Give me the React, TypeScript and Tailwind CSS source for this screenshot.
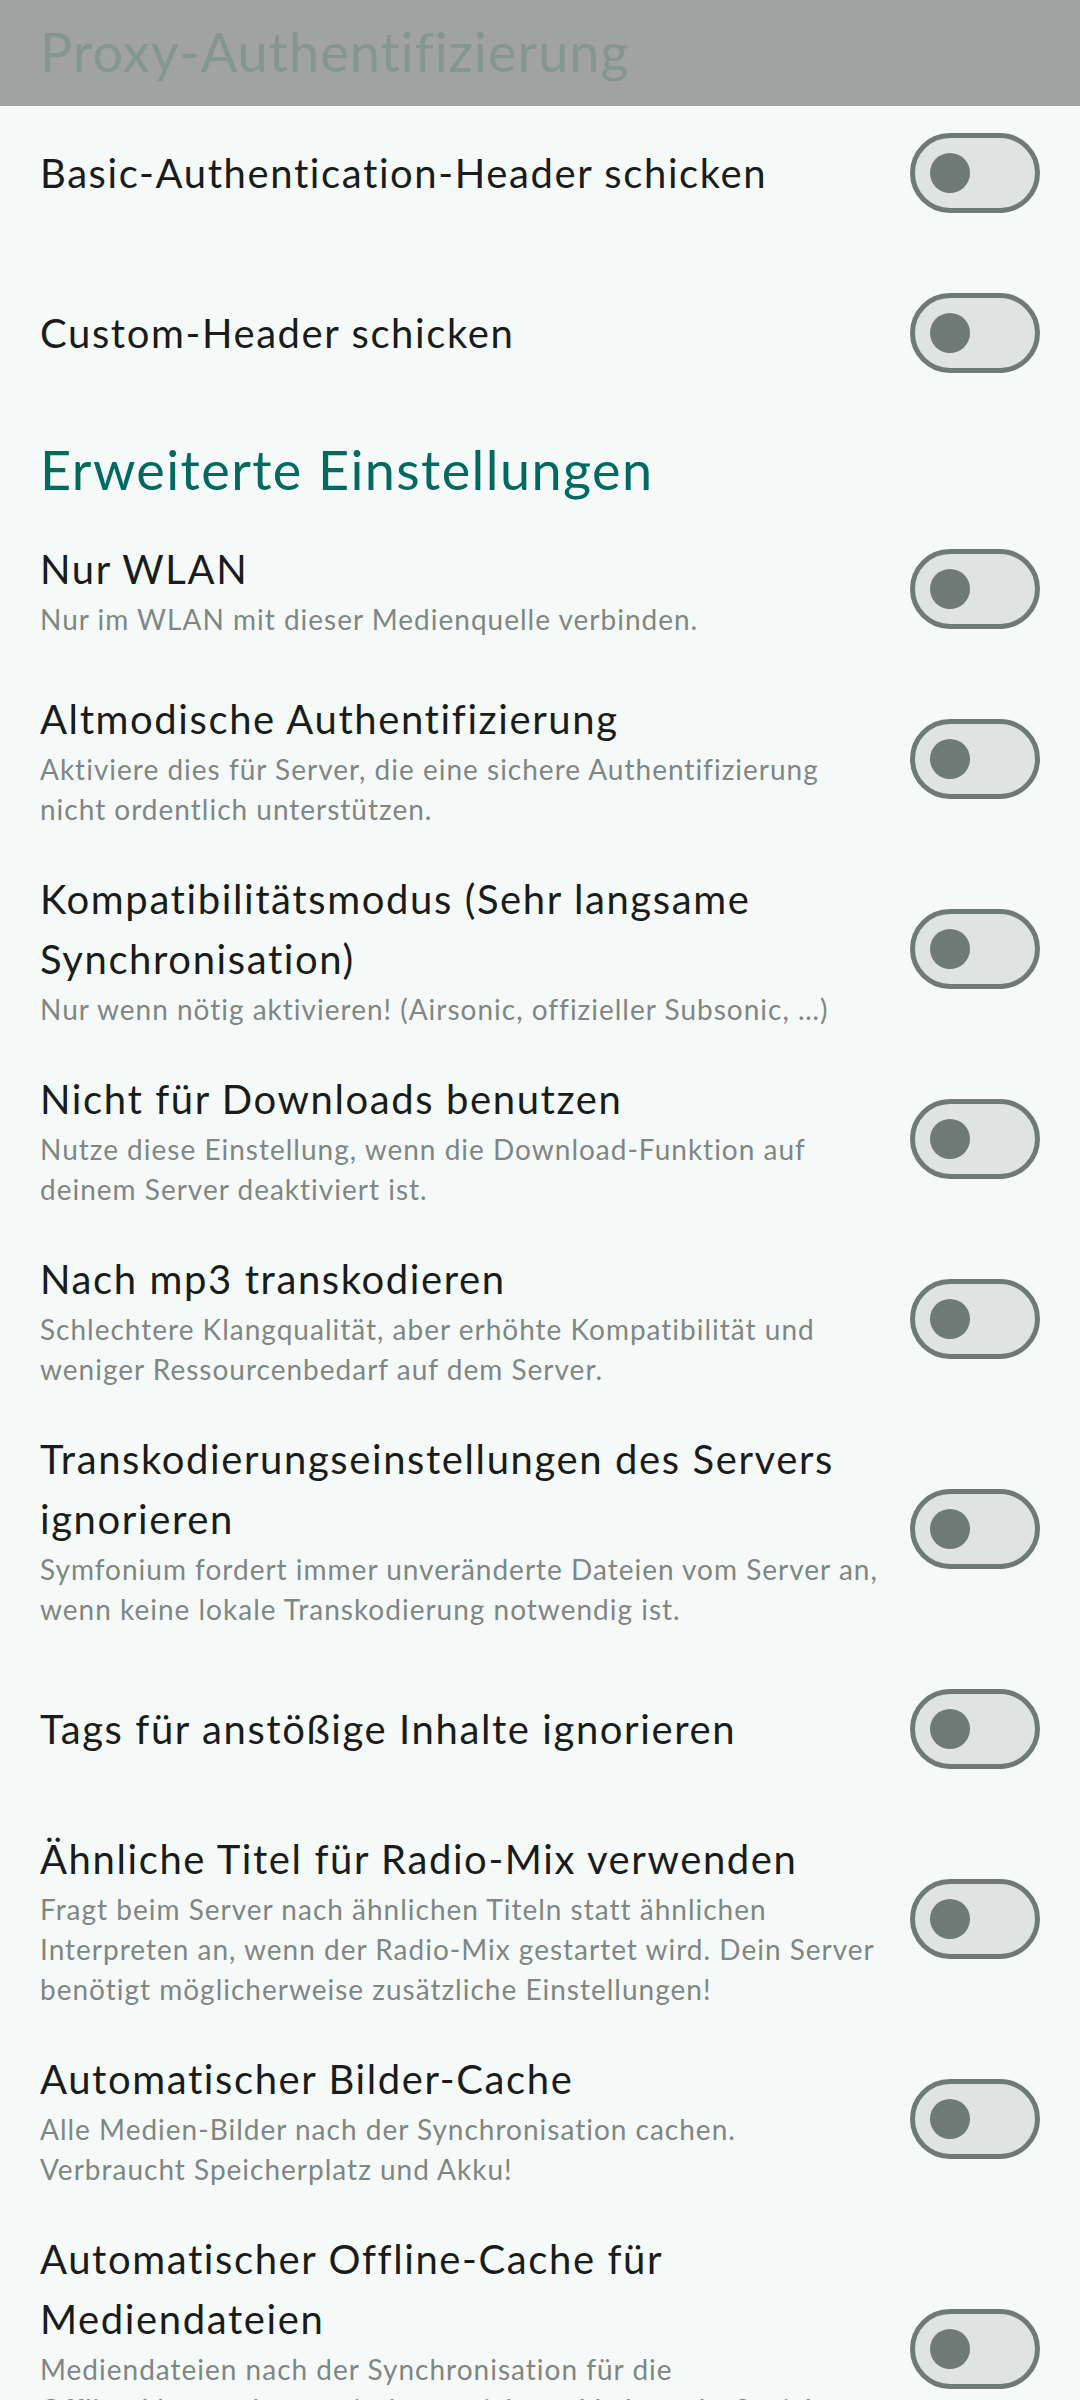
import React from "react";

type Row = { title: string[]; sub?: string[] };

const rows: Row[] = [
  { title: ["Nur WLAN"], sub: ["Nur im WLAN mit dieser Medienquelle verbinden."] },
  {
    title: ["Altmodische Authentifizierung"],
    sub: ["Aktiviere dies für Server, die eine sichere Authentifizierung", "nicht ordentlich unterstützen."],
  },
  {
    title: ["Kompatibilitätsmodus (Sehr langsame", "Synchronisation)"],
    sub: ["Nur wenn nötig aktivieren! (Airsonic, offizieller Subsonic, …)"],
  },
  {
    title: ["Nicht für Downloads benutzen"],
    sub: ["Nutze diese Einstellung, wenn die Download-Funktion auf", "deinem Server deaktiviert ist."],
  },
  {
    title: ["Nach mp3 transkodieren"],
    sub: ["Schlechtere Klangqualität, aber erhöhte Kompatibilität und", "weniger Ressourcenbedarf auf dem Server."],
  },
  {
    title: ["Transkodierungseinstellungen des Servers", "ignorieren"],
    sub: ["Symfonium fordert immer unveränderte Dateien vom Server an,", "wenn keine lokale Transkodierung notwendig ist."],
  },
  { title: ["Tags für anstößige Inhalte ignorieren"] },
  {
    title: ["Ähnliche Titel für Radio-Mix verwenden"],
    sub: [
      "Fragt beim Server nach ähnlichen Titeln statt ähnlichen",
      "Interpreten an, wenn der Radio-Mix gestartet wird. Dein Server",
      "benötigt möglicherweise zusätzliche Einstellungen!",
    ],
  },
  {
    title: ["Automatischer Bilder-Cache"],
    sub: ["Alle Medien-Bilder nach der Synchronisation cachen.", "Verbraucht Speicherplatz und Akku!"],
  },
  {
    title: ["Automatischer Offline-Cache für", "Mediendateien"],
    sub: [
      "Mediendateien nach der Synchronisation für die",
      "Offline-Verwendung zwischenspeichern. Verbraucht Speicher",
      "und Akku!",
    ],
  },
];

const font = { fontFamily: "Lato, 'Noto Sans', sans-serif" };

function Toggle() {
  return (
    <div className="shrink-0 w-[130px] h-[80px] rounded-full border-[5px] border-[#6f7976] bg-[#dfe3e1] flex items-center pl-[15px]">
      <div className="w-[40px] h-[40px] rounded-full bg-[#6f7976]" />
    </div>
  );
}

function PrefRow({ row }: { row: Row }) {
  return (
    <div className="flex items-center min-h-[160px] py-[20px] pl-[40px] pr-[40px]">
      <div className="flex-1 flex flex-col">
        {row.title.map((t, i) => (
          <div key={i} className="text-[40px] leading-[60px] text-[#191c1b] whitespace-nowrap tracking-[1.6px]">
            {t}
          </div>
        ))}
        {row.sub?.map((t, i) => (
          <div key={i} className="text-[28px] leading-[40px] text-[#808684] whitespace-nowrap tracking-[1px]">
            {t}
          </div>
        ))}
      </div>
      <Toggle />
    </div>
  );
}

export default function App() {
  return (
    <div className="w-[1080px] h-[2400px] overflow-hidden bg-[#f5faf8]" style={font}>
      <div className="h-[106px] bg-[#a0a3a1] pl-[40px] pt-[20px] overflow-hidden">
        <div className="text-[54px] leading-[64px] text-[#85968f] whitespace-nowrap tracking-[1px]">
          Proxy-Authentifizierung
        </div>
      </div>
      <div className="flex items-center h-[147px] pb-[13px] pl-[40px] pr-[40px]">
        <div className="flex-1 text-[40px] leading-[60px] text-[#191c1b] tracking-[1.6px] whitespace-nowrap">
          Basic-Authentication-Header schicken
        </div>
        <Toggle />
      </div>
      <div className="flex items-center h-[160px] pl-[40px] pr-[40px]">
        <div className="flex-1 text-[40px] leading-[60px] text-[#191c1b] tracking-[1.6px] whitespace-nowrap">
          Custom-Header schicken
        </div>
        <Toggle />
      </div>
      <div className="h-[96px] pl-[40px] pt-[25px]">
        <div className="text-[54px] leading-[64px] text-[#006a60] whitespace-nowrap tracking-[1.4px]">
          Erweiterte Einstellungen
        </div>
      </div>
      {rows.map((r, i) => (
        <PrefRow key={i} row={r} />
      ))}
    </div>
  );
}
